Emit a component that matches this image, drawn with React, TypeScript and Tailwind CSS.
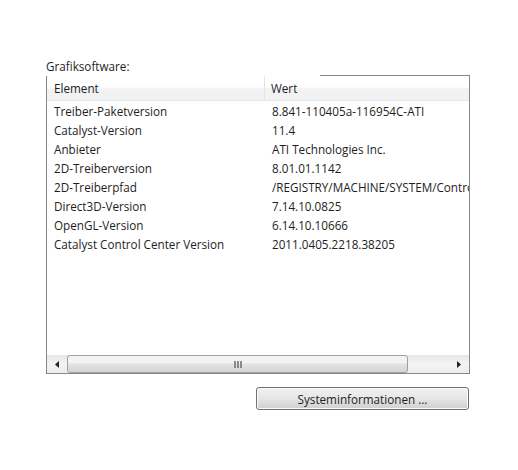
const rows: [string, string][] = [
  ["Treiber-Paketversion", "8.841-110405a-116954C-ATI"],
  ["Catalyst-Version", "11.4"],
  ["Anbieter", "ATI Technologies Inc."],
  ["2D-Treiberversion", "8.01.01.1142"],
  ["2D-Treiberpfad", "/REGISTRY/MACHINE/SYSTEM/ControlSet001/Control/Video"],
  ["Direct3D-Version", "7.14.10.0825"],
  ["OpenGL-Version", "6.14.10.10666"],
  ["Catalyst Control Center Version", "2011.0405.2218.38205"],
];

function Arrow({ dir }: { dir: "left" | "right" }) {
  return (
    <svg width="4" height="7" viewBox="0 0 4 7">
      {dir === "left" ? (
        <path d="M4 0 L0 3.5 L4 7 Z" fill="#222" />
      ) : (
        <path d="M0 0 L4 3.5 L0 7 Z" fill="#222" />
      )}
    </svg>
  );
}

export default function App() {
  return (
    <div
      className="h-[470px] w-[518px] overflow-hidden bg-white pl-[46px] pt-[58px] text-[11.7px] leading-[16px] text-[#1e1e1e]"
      style={{ fontFamily: '"Segoe UI", "Open Sans", "Noto Sans", sans-serif' }}
    >
      <div className="h-[17px]">Grafiksoftware:</div>

      <div className="flex h-[299px] w-[424px] flex-col">
        {/* top edge: only partly drawn */}
        <div className="flex h-px">
          <div className="flex-1" />
          <div className="w-[150px] bg-[#828790]" />
        </div>
        <div className="flex flex-1 flex-col overflow-hidden border-x border-b border-[#828790]">
          <div className="flex h-[25px] shrink-0 border-b border-[#e5e5e5] bg-gradient-to-b from-white from-45% to-[#f1f2f4] to-55%">
            <div className="flex w-[218px] items-center border-r border-[#e3e4e6] pl-[7px]">Element</div>
            <div className="flex flex-1 items-center pl-[6px]">Wert</div>
          </div>

          <div className="flex-1 overflow-hidden">
            {rows.map(([k, v]) => (
              <div key={k} className="flex h-[19px] items-center whitespace-nowrap">
                <div className="w-[218px] pl-[7px]">{k}</div>
                <div className="flex-1 overflow-hidden pl-[7px]">{v}</div>
              </div>
            ))}
          </div>

          <div className="flex h-[18px] shrink-0 items-stretch bg-gradient-to-b from-[#e6e6e6] via-[#f4f4f4] to-[#ececec]">
            <div className="flex w-[20px] items-center justify-center">
              <Arrow dir="left" />
            </div>
            <div className="flex w-[341px] items-center justify-center rounded-[3px] border border-[#a0a0a0] bg-gradient-to-b from-[#f3f3f3] from-40% via-[#e4e4e4] to-[#d4d4d4]">
              <div className="flex gap-[1px]">
                <div className="h-[7px] w-[2px] bg-[#8a8a8a]" />
                <div className="h-[7px] w-[2px] bg-[#8a8a8a]" />
                <div className="h-[7px] w-[2px] bg-[#8a8a8a]" />
              </div>
            </div>
            <div className="flex-1" />
            <div className="flex w-[20px] items-center justify-center">
              <Arrow dir="right" />
            </div>
          </div>
        </div>
      </div>

      <div className="mt-[13px] flex w-[423px] justify-end">
        <button
          type="button"
          className="flex h-[23px] w-[213px] items-center justify-center rounded-[3px] border border-[#707070] bg-gradient-to-b from-[#f2f2f2] from-0% via-[#e6e6e6] via-50% to-[#cfcfcf] to-100% text-[11.7px] text-[#1e1e1e] shadow-[inset_0_0_0_1px_#fbfbfb]"
        >
          Systeminformationen ...
        </button>
      </div>
    </div>
  );
}
